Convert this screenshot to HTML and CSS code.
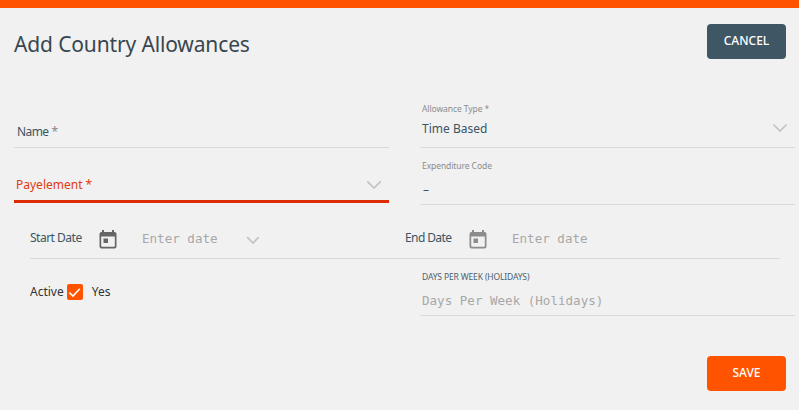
FILE: index.html
```html
<!DOCTYPE html>
<html lang="en">
<head>
<meta charset="utf-8">
<title>Add Country Allowances</title>
<link rel="stylesheet" href="styles.css">
</head>
<body>
<header class="header">
  <h1 class="title">Add Country Allowances</h1>
  <button class="btn cancel">CANCEL</button>
</header>
<main>
  <div class="columns">
    <div class="column">
      <div class="field name"><span class="name-label">Name</span> <span class="star">*</span></div>
      <div class="field payelement"><span>Payelement *</span>
        <svg class="chevron" width="16" height="10" viewBox="0 0 16 10"><path d="M1.3 1.3 8 8 14.7 1.3"/></svg>
      </div>
    </div>
    <div class="column">
      <div class="field type">
        <div><div class="caption">Allowance Type *</div><div class="value">Time Based</div></div>
        <svg class="chevron" width="16" height="10" viewBox="0 0 16 10"><path d="M1.5 1.5 8 8 14.5 1.5"/></svg>
      </div>
      <div class="field code">
        <div><div class="caption">Expenditure Code</div><div class="value dash">–</div></div>
      </div>
    </div>
  </div>
  <div class="dates">
    <div class="date start">
      <span class="label">Start Date</span>
      <svg class="calendar" width="18" height="20" viewBox="0 0 18 20"><path fill-rule="evenodd" d="M3 0h2v2h8V0h2v2h.5a2 2 0 0 1 2 2v12.500a2 2 0 0 1-2 2H2.500a2 2 0 0 1-2-2V4a2 2 0 0 1 2-2H3zM2.200 6.500v9.500q0 .8.8.8h12q.8 0 .8-.8V6.500zM4.500 8.500h4.500v4.500H4.500z"/></svg>
      <span class="placeholder">Enter date</span>
      <svg class="chevron" width="14" height="9" viewBox="0 0 14 9"><path d="M1.2 1.2 7 7 12.8 1.2"/></svg>
    </div>
    <div class="date end">
      <span class="label">End Date</span>
      <svg class="calendar" width="18" height="20" viewBox="0 0 18 20"><path fill-rule="evenodd" d="M3 0h2v2h8V0h2v2h.5a2 2 0 0 1 2 2v12.500a2 2 0 0 1-2 2H2.500a2 2 0 0 1-2-2V4a2 2 0 0 1 2-2H3zM2.200 6.500v9.500q0 .8.8.8h12q.8 0 .8-.8V6.500zM4.500 8.500h4.500v4.500H4.500z"/></svg>
      <span class="placeholder">Enter date</span>
    </div>
  </div>
  <div class="columns">
    <div class="column active">
      <span>Active</span>
      <svg class="check" width="16" height="16" viewBox="0 0 16 16"><rect width="16" height="16" rx="2"/><path d="M2.4 8.6 6 12.1 12.8 4.8"/></svg>
      <span>Yes</span>
    </div>
    <div class="column field days">
      <div><div class="caption">DAYS PER WEEK (HOLIDAYS)</div><div class="placeholder">Days Per Week (Holidays)</div></div>
    </div>
  </div>
</main>
<footer class="footer"><button class="btn save">SAVE</button></footer>
</body>
</html>
```
FILE: styles.css
```css
* { box-sizing: border-box; }
body {
  margin: 0;
  height: 410px;
  overflow: hidden;
  background: #f1f1f1;
  border-top: 8px solid #ff5300;
  color: #3c5563;
  font: 12px/16px "Noto Sans", sans-serif;
  white-space: nowrap;
}
svg { display: block; flex: none; }
.header {
  display: flex;
  justify-content: space-between;
  align-items: flex-start;
  height: 86px;
  padding: 16px 13px 0 14px;
}
.title {
  margin: 6px 0 0;
  color: #38474f;
  font-size: 21px;
  font-weight: 400;
  letter-spacing: -0.14px;
  line-height: 28px;
}
.btn {
  width: 79px;
  height: 35px;
  padding: 0 0 2px;
  border: 0;
  border-radius: 4px;
  color: #fff;
  font: 500 12px/16px "Noto Sans", sans-serif;
}
.cancel { background: #3f5765; }
.save { background: #ff5300; }
.columns {
  display: grid;
  grid-template-columns: 375px 375px;
  column-gap: 31px;
  padding-left: 14px;
}
.field {
  display: flex;
  justify-content: space-between;
  border-bottom: 1px solid #dadada;
}
.name {
  height: 54px;
  padding: 30px 0 0 3px;
  justify-content: flex-start;
  gap: 3px;
}
.name-label { letter-spacing: -0.6px; }
.star { color: #888; }
.payelement {
  height: 55px;
  padding: 29px 7px 0 2px;
  border-bottom: 3px solid #dc2c00;
  color: #e03a10;
}
.payelement .chevron { margin-top: 3px; }
.chevron { fill: none; stroke: #c3c3c3; stroke-width: 1.7; }
.type { height: 54px; padding: 9px 7px 0 2px; }
.type .chevron { margin-top: 20px; }
.code { height: 57px; padding: 12px 0 0 2px; }
.caption {
  color: #8c8c8c;
  font-size: 8.5px;
  letter-spacing: -0.08px;
  line-height: 12px;
}
.value { margin-top: 6px; line-height: 16px; }
.dash { padding-left: 1px; margin-top: 10px; }
.dates {
  display: grid;
  grid-template-columns: 375px 375px;
  width: 750px;
  height: 54px;
  margin-left: 30px;
  padding-top: 24px;
  border-bottom: 1px solid #dadada;
}
.date { display: flex; align-items: flex-start; }
.label { width: 69px; margin-top: 1px; letter-spacing: -0.5px; }
.end .label { width: 64px; letter-spacing: -0.6px; }
.calendar { margin-top: 1px; fill: #666; }
.end .calendar { fill: #8c8c8c; }
.placeholder {
  color: #a8a8a8;
  font: 12.55px/18px "DejaVu Sans Mono", monospace;
}
.date .placeholder { margin: 1px 0 0 25px; }
.date .chevron { margin: 7px 0 0 28px; }
.active {
  display: flex;
  align-items: flex-start;
  padding: 25px 0 0 16px;
  color: #333;
}
.check { margin: 0 9px 0 3px; }
.check rect { fill: #ff5300; }
.check path { fill: none; stroke: #fff; stroke-width: 1.6; }
.days { height: 57px; padding: 12px 0 0 2px; }
.days .caption { color: #4b6270; letter-spacing: -0.14px; }
.days .placeholder { margin-top: 9px; }
.footer {
  display: flex;
  justify-content: flex-end;
  padding: 40px 13px 0 0;
}
```
